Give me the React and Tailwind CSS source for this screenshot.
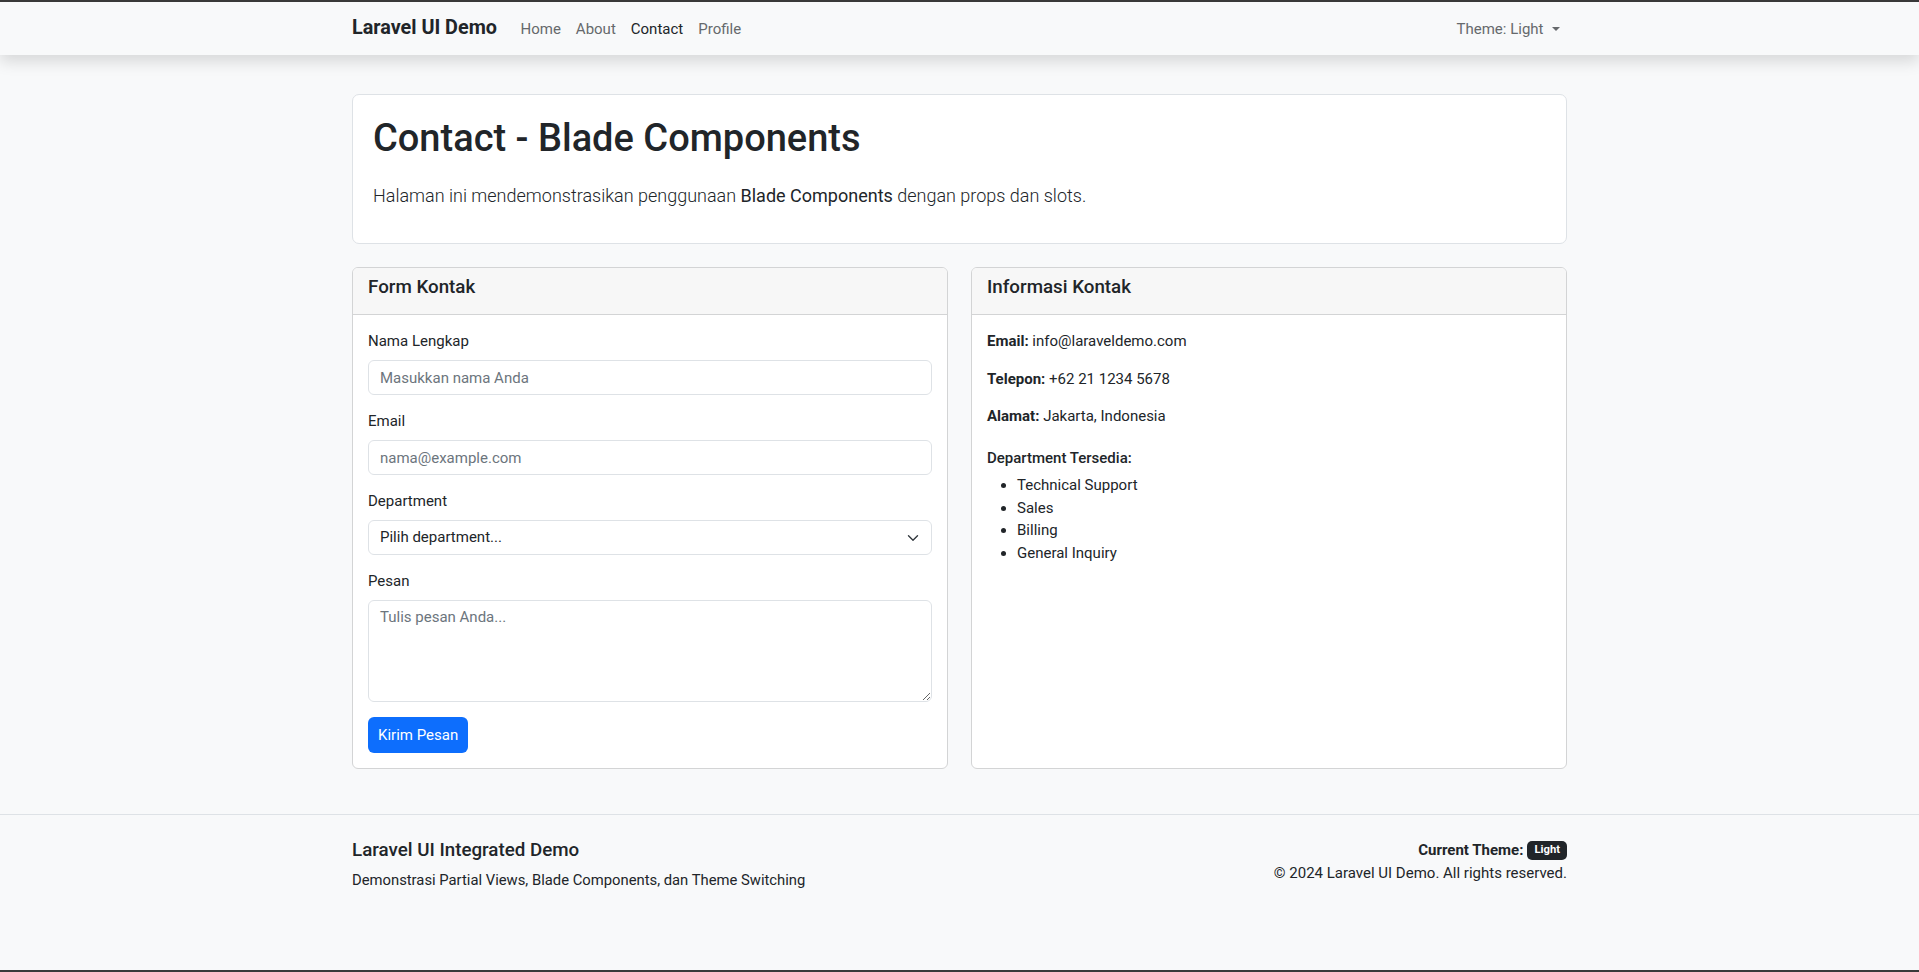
const NavLink = ({ children, active }) => (
  <a
    href="#"
    className={
      active
        ? "px-[7.5px] py-[7.5px] text-[#212529]"
        : "px-[7.5px] py-[7.5px] text-[#66696c]"
    }
  >
    {children}
  </a>
);

const Field = ({ label, children }) => (
  <div className="mb-[15px]">
    <label className="block mb-[7.5px] leading-[22.5px]">{label}</label>
    {children}
  </div>
);

const Card = ({ title, children }) => (
  <div className="bg-white border border-[#d3d4d5] rounded-[6px] flex flex-col overflow-hidden">
    <div className="bg-[#f7f7f7] border-b border-[#d3d4d5] px-[15px] pt-[8px] pb-[15.5px]">
      <h5 className="text-[18.75px] font-medium leading-[22.5px]">{title}</h5>
    </div>
    <div className="p-[15px] flex-1">{children}</div>
  </div>
);

const App = () => {
  return (
    <div
      className="h-screen flex flex-col bg-[#f8f9fa] text-[#212529] text-[15px] leading-[22.5px] border-t-2 border-b-2 border-[#3a3a3a]"
      style={{ fontFamily: "Roboto, 'Liberation Sans', sans-serif" }}
    >
      <nav className="relative z-10 h-[53px] bg-[#f8f9fa] shadow-[0_7px_14px_rgba(0,0,0,0.13)]">
        <div className="w-[1215px] mx-auto h-full flex items-center justify-between pt-[1px]">
          <div className="flex items-center">
            <a href="#" className="text-[19.8px] font-bold mr-[16px] -mt-[1px]">
              Laravel UI Demo
            </a>
            <NavLink>Home</NavLink>
            <NavLink>About</NavLink>
            <NavLink active>Contact</NavLink>
            <NavLink>Profile</NavLink>
          </div>
          <button className="px-[7.5px] py-[7.5px] text-[#66696c] flex items-center gap-[8px]">
            Theme: Light
            <span className="w-0 h-0 border-l-[4.5px] border-r-[4.5px] border-t-[4.5px] border-l-transparent border-r-transparent border-t-[#66696c]" />
          </button>
        </div>
      </nav>

      <main className="w-[1215px] mx-auto pt-[39px]">
        <div className="bg-white border border-[#dee2e6] rounded-[7px] px-[20px] pt-[21px] pb-[33px]">
          <h1 className="text-[38px] font-medium leading-[45px] mb-[21px]">
            Contact - Blade Components
          </h1>
          <p className="text-[18px] font-light leading-[28px]">
            Halaman ini mendemonstrasikan penggunaan{" "}
            <span className="font-normal">Blade Components</span> dengan props dan slots.
          </p>
        </div>

        <div className="grid grid-cols-2 gap-[23px] mt-[23px]">
          <Card title="Form Kontak">
            <Field label="Nama Lengkap">
              <input
                type="text"
                placeholder="Masukkan nama Anda"
                className="w-full h-[35px] border border-[#dee2e6] rounded-[6px] px-[11px] placeholder-[#6c757d] outline-none"
              />
            </Field>
            <Field label="Email">
              <input
                type="email"
                placeholder="nama@example.com"
                className="w-full h-[35px] border border-[#dee2e6] rounded-[6px] px-[11px] placeholder-[#6c757d] outline-none"
              />
            </Field>
            <Field label="Department">
              <div className="relative">
                <div className="w-full h-[35px] border border-[#dee2e6] rounded-[6px] px-[11px] flex items-center">
                  Pilih department...
                </div>
                <svg
                  className="absolute right-[13px] top-[14px]"
                  width="12"
                  height="8"
                  viewBox="0 0 12 8"
                  fill="none"
                  stroke="#343a40"
                  strokeWidth="1.4"
                  strokeLinecap="round"
                  strokeLinejoin="round"
                >
                  <path d="M1.5 1.8l4.5 4.4 4.5-4.4" />
                </svg>
              </div>
            </Field>
            <Field label="Pesan">
              <textarea
                placeholder="Tulis pesan Anda..."
                className="block w-full h-[102px] border border-[#dee2e6] rounded-[6px] px-[11px] py-[5px] placeholder-[#6c757d] outline-none"
              />
            </Field>
            <button className="block mt-[1px] h-[36px] px-[10px] whitespace-nowrap bg-[#0d6efd] text-white rounded-[6px]">
              Kirim Pesan
            </button>
          </Card>

          <Card title="Informasi Kontak">
            <p className="mb-[15px]">
              <strong className="font-bold">Email:</strong> info@laraveldemo.com
            </p>
            <p className="mb-[15px]">
              <strong className="font-bold">Telepon:</strong> +62 21 1234 5678
            </p>
            <p className="mb-[15px]">
              <strong className="font-bold">Alamat:</strong> Jakarta, Indonesia
            </p>
            <h6 className="mt-[21.5px] mb-[7px] font-medium leading-[18px]">Department Tersedia:</h6>
            <ul className="list-disc pl-[30px]">
              <li>Technical Support</li>
              <li>Sales</li>
              <li>Billing</li>
              <li>General Inquiry</li>
            </ul>
          </Card>
        </div>
      </main>

      <footer className="flex-1 mt-[45px] border-t border-[#dee2e6] bg-[#f8f9fa]">
        <div className="w-[1215px] mx-auto pt-[24px] flex justify-between">
          <div>
            <h5 className="text-[18.75px] font-medium leading-[22.5px] mb-[7px]">
              Laravel UI Integrated Demo
            </h5>
            <p className="text-[14.8px]">Demonstrasi Partial Views, Blade Components, dan Theme Switching</p>
          </div>
          <div className="text-right">
            <p className="flex items-center justify-end gap-[4px]">
              <strong className="font-bold">Current Theme:</strong>
              <span className="bg-[#212529] text-white text-[11.25px] font-bold leading-[12px] px-[7px] py-[3.5px] rounded-[5px]">
                Light
              </span>
            </p>
            <p>© 2024 Laravel UI Demo. All rights reserved.</p>
          </div>
        </div>
      </footer>
    </div>
  );
};

export default App;
